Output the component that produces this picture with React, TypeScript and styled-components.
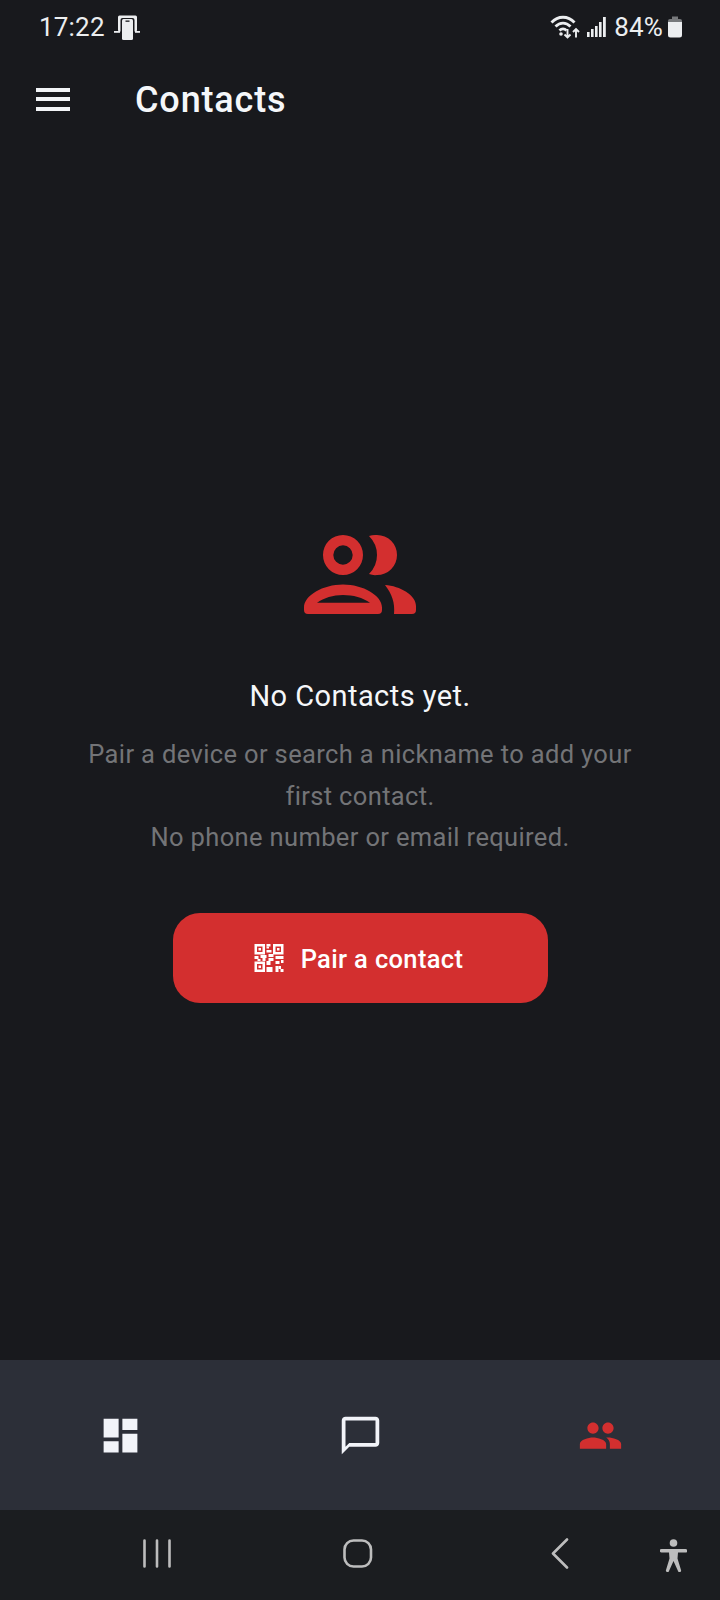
import React from 'react'
import styled, { createGlobalStyle } from 'styled-components'

const GlobalStyle = createGlobalStyle`
  html, body {
    margin: 0;
    padding: 0;
    background: #18191d;
  }
  * {
    box-sizing: border-box;
  }
`

const Screen = styled.div`
  width: 720px;
  height: 1600px;
  display: flex;
  flex-direction: column;
  background: #18191d;
  font-family: Roboto, "Liberation Sans", sans-serif;
  overflow: hidden;
`

const StatusBar = styled.div`
  height: 54px;
  padding: 0 37px 0 39px;
  display: flex;
  align-items: center;
  justify-content: space-between;
  color: #eceef0;
  font-size: 26px;
  letter-spacing: 0.2px;
`

const StatusGroup = styled.div`
  display: flex;
  align-items: center;
`

const Percent = styled.span`
  margin-left: 8px;
`

const AppBar = styled.div`
  height: 90px;
  padding-left: 36px;
  display: flex;
  align-items: center;
`

const MenuButton = styled.div`
  width: 34px;
  height: 23px;
  margin-right: 65px;
  display: flex;
  flex-direction: column;
  justify-content: space-between;
`

const MenuBar = styled.span`
  display: block;
  height: 4px;
  background: #f2f4f7;
`

const Title = styled.h1`
  margin: 0;
  padding-top: 2px;
  color: #f5f7fa;
  font-size: 36px;
  font-weight: 500;
  letter-spacing: 0.85px;
`

const Main = styled.main`
  flex: 1;
  padding-top: 12px;
  display: flex;
  flex-direction: column;
  align-items: center;
  justify-content: center;
`

const EmptyIcon = styled.svg`
  width: 122px;
  height: 122px;
  display: block;
`

const Heading = styled.div`
  margin-top: 41px;
  color: #f5f7fa;
  font-size: 29px;
  line-height: 41px;
  letter-spacing: 0.45px;
`

const Description = styled.p`
  margin: 17px 0 0;
  width: 570px;
  color: #737477;
  font-size: 25.5px;
  line-height: 41.5px;
  letter-spacing: 0.36px;
  text-align: center;
`

const PairButton = styled.button`
  width: 375px;
  height: 90px;
  margin-top: 54px;
  padding: 0 3px 0 0;
  border: 0;
  border-radius: 27px;
  background: #d32f2f;
  color: #fff;
  font-family: inherit;
  font-size: 25.5px;
  font-weight: 500;
  letter-spacing: 0.35px;
  display: flex;
  align-items: center;
  justify-content: center;
  gap: 17px;
`

const PairLabel = styled.span`
  padding-top: 2px;
`

const BottomNav = styled.nav`
  height: 150px;
  display: grid;
  grid-template-columns: repeat(3, 1fr);
  background: #2c2f38;
`

const NavItem = styled.div<{ $active?: boolean }>`
  display: flex;
  align-items: center;
  justify-content: center;
  color: ${p => (p.$active ? '#d32f2f' : '#f2f4f9')};
`

const NavIcon = styled.svg`
  width: 45px;
  height: 45px;
  display: block;
  fill: currentColor;
`

const SystemNav = styled.div`
  height: 90px;
  position: relative;
  background: #1b1d20;
`

const SystemIcon = styled.svg<{ $left: number; $top: number; $w: number; $h: number }>`
  position: absolute;
  left: ${p => p.$left}px;
  top: ${p => p.$top}px;
  width: ${p => p.$w}px;
  height: ${p => p.$h}px;
  color: #bdbdbd;
`

function CastIcon () {
  return (
    <svg width='26' height='25' viewBox='0 0 26 25' style={{ marginLeft: 9 }}>
      <rect x='4' y='0.500' width='19' height='16' rx='1.500' fill='#eceef0' />
      <rect x='6.500' y='3' width='14' height='22' rx='2' fill='#18191d' />
      <rect x='8' y='4' width='11' height='21' rx='1.500' fill='#eceef0' />
      <rect x='11.500' y='5.500' width='4' height='1.300' fill='#18191d' />
      <rect x='0' y='16' width='6' height='1.800' fill='#eceef0' />
      <rect x='21' y='16' width='5' height='1.800' fill='#eceef0' />
    </svg>
  )
}

function WifiIcon () {
  return (
    <svg width='30' height='24' viewBox='0 0 30 24' fill='none' stroke='#eceef0'>
      <path d='M1.500 7.500C8 .5 18 .5 24.500 7.500' strokeWidth='2.800' />
      <path d='M5.500 11.500C10 7 16 7 20.500 11.500' strokeWidth='2.800' />
      <path d='M9.500 15.500c2-2 5-2 7 0' strokeWidth='2.800' />
      <circle cx='11' cy='19' r='1.800' fill='#eceef0' stroke='none' />
      <path d='M17.500 14v8.500M14.500 19.500l3 3 3-3' strokeWidth='1.900' />
      <path d='M26 22.500V14M23 17l3-3 3 3' strokeWidth='1.900' />
    </svg>
  )
}

function SignalIcon () {
  return (
    <svg width='19' height='20' viewBox='0 0 19 20' fill='#eceef0' style={{ marginLeft: 7 }}>
      <rect x='0' y='15' width='2.600' height='5' />
      <rect x='4' y='12' width='2.600' height='8' />
      <rect x='8' y='9' width='2.600' height='11' />
      <rect x='12' y='5' width='2.600' height='15' />
      <rect x='16' y='0' width='2.800' height='20' />
    </svg>
  )
}

function BatteryIcon () {
  return (
    <svg width='16' height='22' viewBox='0 0 16 22' fill='none' style={{ marginLeft: 4 }}>
      <path d='M5 0.500h6v2.500H5z' fill='#77797c' />
      <path d='M3 3h10a2 2 0 0 1 2 2v1H1V5a2 2 0 0 1 2-2z' fill='#77797c' />
      <path d='M1 6h14v13a2.500 2.500 0 0 1-2.500 2.500h-9A2.500 2.500 0 0 1 1 19z' fill='#eceef0' />
    </svg>
  )
}

function QrIcon () {
  const cells = [
    [12, 0, 4, 2.500], [12, 2.500, 2.500, 2], [12, 6, 5, 2.500],
    [0, 12, 4, 3], [6, 11, 6, 3], [14, 10, 5, 3], [8, 14, 3, 3],
    [21, 12, 8, 3], [14, 14, 5, 3], [12, 17, 4, 4], [3, 15, 3, 2],
    [21, 17, 4, 3], [12, 23, 6, 5], [21, 22, 3, 6],
    [24, 22, 2.500, 3], [26, 25, 3, 3], [26.500, 16, 2.500, 3]
  ]
  return (
    <svg width='30' height='28' viewBox='0 0 29 28' fill='#fff'>
      <path fillRule='evenodd' d='M0 0h10.500v10.500H0zM2.500 2.500v5.500h5.500V2.500zM18.500 0h10.500v10.500H18.500zM21 2.500v5.500h5.500V2.500zM0 17.500h10.500V28H0zM2.500 20v5.500h5.500V20z' />
      <rect x='4' y='4' width='2.500' height='2.500' />
      <rect x='22.500' y='4' width='2.500' height='2.500' />
      <rect x='4' y='21.500' width='2.500' height='2.500' />
      {cells.map(([x, y, w, h], i) => (
        <rect key={i} x={x} y={y} width={w} height={h} />
      ))}
    </svg>
  )
}

export default function App () {
  return (
    <Screen>
      <GlobalStyle />
      <StatusBar>
        <StatusGroup>
          17:22
          <CastIcon />
        </StatusGroup>
        <StatusGroup>
          <WifiIcon />
          <SignalIcon />
          <Percent>84%</Percent>
          <BatteryIcon />
        </StatusGroup>
      </StatusBar>

      <AppBar>
        <MenuButton>
          <MenuBar />
          <MenuBar />
          <MenuBar />
        </MenuButton>
        <Title>Contacts</Title>
      </AppBar>

      <Main>
        <EmptyIcon viewBox='299 513 122 122' fill='#d32f2f'>
          <path
            fillRule='evenodd'
            d='M343 535a20 20 0 1 1 0 40a20 20 0 1 1 0-40zM343 545.300a9.700 9.700 0 1 0 0 19.400a9.700 9.700 0 1 0 0-19.400z'
          />
          <path d='M369 536q4-1.500 8-1a20 20 0 0 1 0 40q-4 .500-8-1q8-8 8-19t-8-19z' />
          <path
            fillRule='evenodd'
            d='M343 584.500c20 0 39 11 39 23v2.500a4 4 0 0 1-4 4h-70a4 4 0 0 1-4-4v-2.500c0-12 19-23 39-23zM317 602.700h53c-7-5-17-7.700-27-7.700s-19 3-26 7.700z'
          />
          <path d='M385 585c15 1 31 10 31 21v4a4 4 0 0 1-4 4h-18c1-11-2-20-9-29z' />
        </EmptyIcon>
        <Heading>No Contacts yet.</Heading>
        <Description>
          Pair a device or search a nickname to add your first contact.
          <br />
          No phone number or email required.
        </Description>
        <PairButton>
          <QrIcon />
          <PairLabel>Pair a contact</PairLabel>
        </PairButton>
      </Main>

      <BottomNav>
        <NavItem>
          <NavIcon viewBox='0 0 24 24'>
            <path d='M3 13h8V3H3v10zm0 8h8v-6H3v6zm10 0h8V11h-8v10zm0-18v6h8V3h-8z' />
          </NavIcon>
        </NavItem>
        <NavItem>
          <NavIcon viewBox='0 0 24 24'>
            <path d='M20 2H4c-1.100 0-2 .9-2 2v18l4-4h14c1.100 0 2-.9 2-2V4c0-1.100-.9-2-2-2zm0 14H6l-2 2V4h16v12z' />
          </NavIcon>
        </NavItem>
        <NavItem $active>
          <NavIcon viewBox='0 0 24 24'>
            <path d='M16 11c1.660 0 2.990-1.340 2.990-3S17.660 5 16 5c-1.660 0-3 1.340-3 3s1.340 3 3 3zm-8 0c1.660 0 2.990-1.340 2.990-3S9.660 5 8 5C6.340 5 5 6.340 5 8s1.340 3 3 3zm0 2c-2.330 0-7 1.170-7 3.500V19h14v-2.500c0-2.330-4.670-3.500-7-3.500zm8 0c-.29 0-.62.02-.97.05 1.160.84 1.970 1.970 1.970 3.450V19h6v-2.500c0-2.330-4.670-3.500-7-3.500z' />
          </NavIcon>
        </NavItem>
      </BottomNav>

      <SystemNav>
        <SystemIcon $left={143} $top={29} $w={28} $h={29} viewBox='0 0 28 29' stroke='currentColor' strokeWidth='2.600' strokeLinecap='round'>
          <path d='M1.500 1.500v26M14 1.500v26M26.500 1.500v26' />
        </SystemIcon>
        <SystemIcon $left={343} $top={29} $w={30} $h={29} viewBox='0 0 30 29' fill='none' stroke='currentColor' strokeWidth='2.600'>
          <rect x='1.500' y='1.500' width='26.500' height='26' rx='9' />
        </SystemIcon>
        <SystemIcon $left={551} $top={28} $w={18} $h={31} viewBox='0 0 18 31' fill='none' stroke='currentColor' strokeWidth='2.600' strokeLinecap='round' strokeLinejoin='round'>
          <path d='M16 1.500L2 15.500l14 14' />
        </SystemIcon>
        <SystemIcon $left={660} $top={29} $w={27} $h={33} viewBox='0 0 27 33' fill='currentColor'>
          <circle cx='13.500' cy='4' r='3.800' />
          <path d='M1.500 10h24a1.400 1.400 0 0 1 0 3.600H18l-.5 6 3.500 11.500a1.500 1.500 0 0 1-3 1L13.500 22 9 32a1.500 1.500 0 0 1-3-1l3.500-11.500-.5-6H1.500a1.400 1.400 0 0 1 0-3.600z' />
        </SystemIcon>
      </SystemNav>
    </Screen>
  )
}
